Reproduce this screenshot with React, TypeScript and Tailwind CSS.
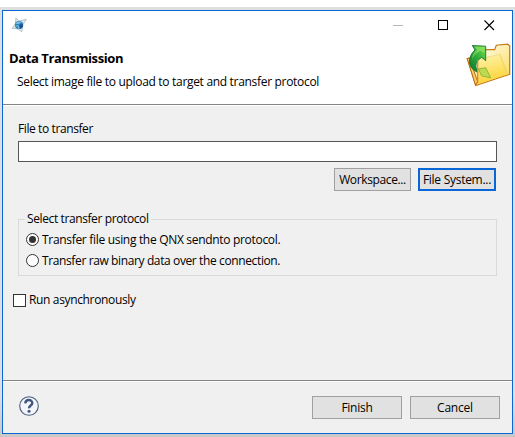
import React, { useState } from "react";

function AppIcon() {
  return (
    <svg width="16" height="16" viewBox="0 0 16 16">
      <path d="M5 0.8 L8 4 L15.4 2.2 L12 7.5 L10.8 14.8 L7 12 L1 11.3 L4.3 7 Z" fill="#e2e8ec" stroke="#a9b8c4" strokeWidth="0.8" />
      <circle cx="8" cy="8" r="4.1" fill="#2f7fbd" />
      <path d="M4.2 6.8 Q6.5 3.3 10.5 4.9 L8 7 Z" fill="#7fbfe2" />
      <path d="M8.3 8 L12 7 Q12.3 10.3 9.3 12 Z" fill="#164f8a" />
      <path d="M4.6 9 L7.3 8.7 L7.8 11.7" fill="none" stroke="#8ec9e8" strokeWidth="0.9" />
    </svg>
  );
}

function FolderIcon() {
  return (
    <svg width="46" height="44" viewBox="0 0 46 44">
      <defs>
        <linearGradient id="back" x1="0" y1="0" x2="1" y2="1">
          <stop offset="0.2" stopColor="#fffbe6" />
          <stop offset="1" stopColor="#fbd84a" />
        </linearGradient>
        <linearGradient id="front" x1="0.4" y1="0" x2="0.6" y2="1">
          <stop offset="0" stopColor="#fdf09b" stopOpacity="0.8" />
          <stop offset="1" stopColor="#fdd02c" />
        </linearGradient>
        <linearGradient id="arrow" x1="0" y1="1" x2="1" y2="0">
          <stop offset="0" stopColor="#08702a" />
          <stop offset="0.5" stopColor="#2fab3b" />
          <stop offset="1" stopColor="#7be04a" />
        </linearGradient>
      </defs>
      <path d="M1.2 15.5 L11 13 L20 6.5 L28.7 6.7 L30.3 2.2 L41.7 1.2 L43.7 2.8 L43.7 31.3 L9.7 42.5 Z" fill="url(#back)" stroke="#c77a16" strokeWidth="1.2" />
      <path d="M12 16.3 L34 11.3 L43 31 L10.5 41.5 Z" fill="url(#front)" />
      <path d="M34 11.3 L41 30.5" fill="none" stroke="#edd277" strokeWidth="1" />
      <path d="M12 16.3 L34 11.3" fill="none" stroke="#ead78c" strokeWidth="0.8" />
      <path d="M1.2 15.5 L3.5 15.3 L11.5 38.5 L9.7 42.5 Z" fill="#fbd267" stroke="#bd6c19" strokeWidth="1" />
      <path d="M12.3 26 L19.7 24.7 L24.7 34.7 L15.7 33 Z" fill="#bfd94f" stroke="#86b63a" strokeWidth="0.9" />
      <path d="M6.3 2.5 L19.7 3.2 L19.7 17.7 L15.7 14.3 Q10 17.5 9.8 23 L11 29 Q4.5 26 3.5 20 Q3.2 12 9 7 Z" fill="url(#arrow)" stroke="#16752a" strokeWidth="0.9" />
      <path d="M8.5 3.5 L18.5 4 L18.5 10 L14 8 Q8 11 6 17 Q6 11 11 7 Z" fill="#a4ef70" opacity="0.5" />
      <path d="M11.7 17 L11.7 40" stroke="#e0781c" strokeWidth="1.1" />
    </svg>
  );
}

function Radio({ label, tracking, checked, onSelect }: { label: string; tracking: string; checked: boolean; onSelect: () => void }) {
  return (
    <button role="radio" aria-checked={checked} onClick={onSelect} className="flex h-[21px] items-center gap-[3px] text-left">
      <svg className="shrink-0" width="13" height="13" viewBox="0 0 13 13">
        <circle cx="6.5" cy="6.5" r="6" fill="white" stroke="#333" />
        {checked && <circle cx="6.5" cy="6.5" r="3.5" fill="#333" />}
      </svg>
      <span className={tracking}>{label}</span>
    </button>
  );
}

export default function App() {
  const [protocol, setProtocol] = useState(0);
  const [async, setAsync] = useState(false);
  return (
    <div className="h-[437px] w-[515px] overflow-hidden bg-[#dedede] font-['Open_Sans',sans-serif] text-[12px] leading-4 text-black">
      <div className="h-[7px] bg-white" />
      <div className="h-[430px] bg-linear-to-b from-[#dfdfdf] from-90% to-[#cbc7c6] pt-[3px] pl-[2px]">
        <div className="flex h-[424px] w-[511px] flex-col border border-[#0866d6] bg-[#f0f0f0]">
          <header className="h-[94px] shrink-0 border-b border-[#848484] bg-white">
            <div className="flex h-[31px] items-start">
              <div className="pt-[6px] pl-[8px]"><AppIcon /></div>
              <svg className="mt-[7px] mr-[15px] ml-auto" width="104" height="15" viewBox="0 0 104 15">
                <path d="M0 7.5 H10" stroke="#b9b9b9" />
                <rect x="45.5" y="2.5" width="9" height="9" fill="none" stroke="black" />
                <path d="M91.5 2.5 L101 12 M101 2.5 L91.5 12" stroke="black" strokeWidth="1.1" />
              </svg>
            </div>
            <div className="flex">
              <div className="pt-[8px] pl-[6px]">
                <h1 className="text-[13px] font-bold tracking-[-0.4px] whitespace-nowrap">Data Transmission</h1>
                <p className="mt-2 ml-2 tracking-[-0.31px] whitespace-nowrap">Select image file to upload to target and transfer protocol</p>
              </div>
              <div className="mt-[1px] ml-auto"><FolderIcon /></div>
            </div>
          </header>
          <main className="flex-1 border-t border-white px-[15px] pt-[15px]">
            <label className="block tracking-[-0.4px]">File to transfer</label>
            <input className="mt-[4px] block h-[21px] w-[479px] border border-[#565656] bg-white px-1 outline-none" />
            <div className="mt-[6px] flex justify-end gap-[7px] pr-[1px]">
              <button className="h-[23px] w-[77px] border border-[#a0a0a0] bg-[#e1e1e1] tracking-[-0.37px]">Workspace...</button>
              <button className="h-[23px] w-[78px] border-2 border-[#0866d6] bg-[#e1e1e1] tracking-[-0.28px]">File System...</button>
            </div>
            <fieldset className="mt-[20px] h-[65px] w-[479px] border border-[#dadada] pl-[7px]">
              <legend className="-ml-[1px] px-[2px] tracking-[-0.39px]">Select transfer protocol</legend>
              <div role="radiogroup" className="flex flex-col pt-[2px]">
                <Radio label="Transfer file using the QNX sendnto protocol." tracking="tracking-[-0.31px]" checked={protocol === 0} onSelect={() => setProtocol(0)} />
                <Radio label="Transfer raw binary data over the connection." tracking="tracking-[-0.38px]" checked={protocol === 1} onSelect={() => setProtocol(1)} />
              </div>
            </fieldset>
            <button role="checkbox" aria-checked={async} onClick={() => setAsync(!async)} className="mt-[16px] -ml-[5px] flex h-4 items-center gap-[3px]">
              <span className="flex size-[13px] items-center justify-center border border-[#333] bg-white text-[10px]">{async ? "✓" : ""}</span>
              <span className="tracking-[-0.35px]">Run asynchronously</span>
            </button>
          </main>
          <footer className="h-[53px] shrink-0 border-t border-[#848484]">
            <div className="flex h-full border-t border-white pt-[14px] pr-[12px] pl-4">
              <svg width="20" height="20" viewBox="0 0 20 20">
                <circle cx="10" cy="10" r="9.3" fill="#f3f5f8" stroke="#4a5d80" strokeWidth="1.1" />
                <path d="M6.3 7.4 C6.5 2.9 13.4 3.1 13.3 7.1 C13.2 9.7 10 9.3 10 12.3" fill="none" stroke="#405681" strokeWidth="2.4" />
                <circle cx="10" cy="15.2" r="1.5" fill="#405681" />
              </svg>
              <button className="ml-auto h-[23px] w-[90px] border border-[#a0a0a0] bg-[#e1e1e1] tracking-[-0.25px]">Finish</button>
              <button className="ml-2 h-[23px] w-[90px] border border-[#a0a0a0] bg-[#e1e1e1] tracking-[-0.2px]">Cancel</button>
            </div>
          </footer>
        </div>
      </div>
    </div>
  );
}
